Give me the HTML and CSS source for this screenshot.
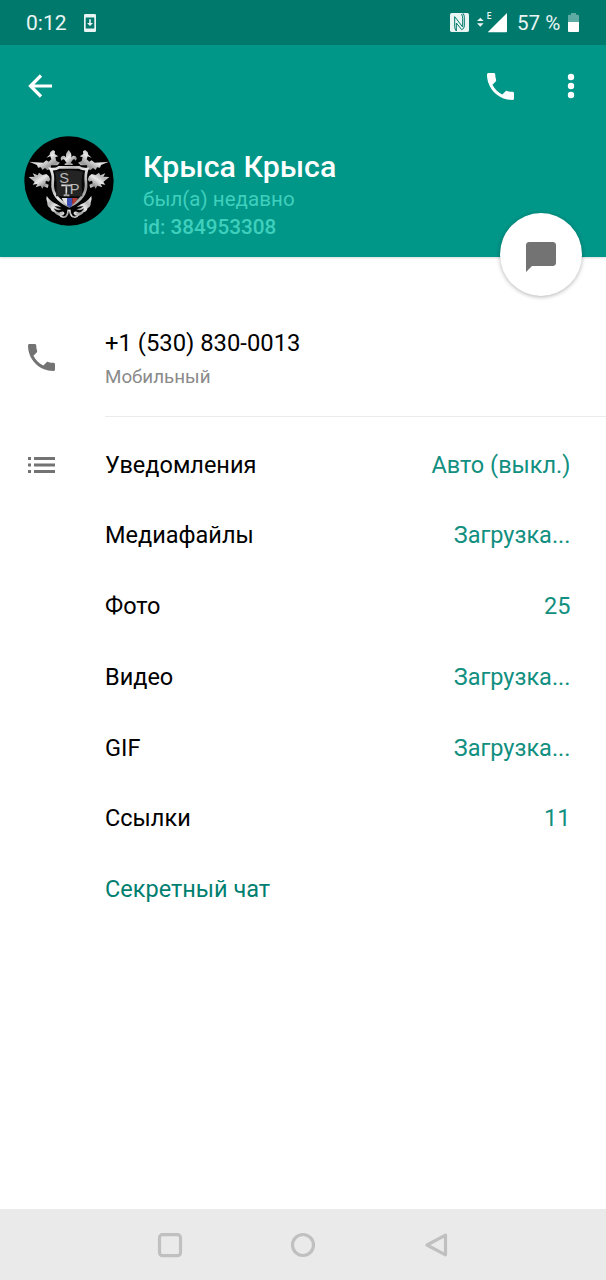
FILE: index.html
```html
<!DOCTYPE html>
<html lang="ru">
<head>
    <meta charset="UTF-8">
    <title>Профиль</title>
    <link rel="stylesheet" href="styles.css">
</head>
<body>
<div class="status-bar">
    <span class="time">0:12</span>
    <svg class="update-icon" width="12" height="18" viewBox="0 0 12 18">
        <path fill="#e9f5f3" fill-rule="evenodd" d="M1.500 0h9A1.300 1.300 0 0 1 12 1.300v15.400a1.300 1.300 0 0 1-1.500 1.300h-9A1.300 1.300 0 0 1 0 16.700V1.300A1.300 1.300 0 0 1 1.500 0zM1.700 3.500v11h8.600v-11zM5.200 5.300h1.600v3.600h2.200L6 12 3 8.900h2.200z"/>
    </svg>
    <div class="status-right">
        <svg class="nfc" width="19" height="19" viewBox="0 0 57 57">
            <path fill="#e9f5f3" d="M5 0h47q5 0 5 5v47q0 5-5 5H5q-5 0-5-5V5q0-5 5-5z"/>
            <path d="M19 54q-5-6-5-14V11l24 31V17q0-7-3-14M19 54V30l16 20q7-2 8-10V13q0-7-4-12" fill="none" stroke="#00796d" stroke-width="3"/>
        </svg>
        <svg class="signal" width="30" height="21" viewBox="0 0 90 63">
            <path fill="#e9f5f3" d="M0 27l10-10 10 10zM0 34h20L10 44z"/>
            <path fill="#fff" d="M32 61L90 3v55q0 3-3 3z"/>
            <text x="29" y="21" class="net">E</text>
        </svg>
        <span class="percent">57 %</span>
        <svg class="battery" width="11" height="19" viewBox="0 0 33 57">
            <path fill="#5eaba3" d="M9 0h15v5h6q3 0 3 3v19H0V8q0-3 3-3h6z"/>
            <path fill="#fff" d="M0 27h33v27q0 3-3 3H3q-3 0-3-3z"/>
        </svg>
    </div>
</div>

<div class="header">
    <div class="toolbar">
        <svg class="back" width="24" height="24" viewBox="0 0 24 24">
            <path d="M24 12H2.500M13 1.500L2.500 12 13 22.500" fill="none" stroke="#fff" stroke-width="3.200"/>
        </svg>
        <svg class="call" width="27" height="27" viewBox="3 3 18 18">
            <path fill="#fff" d="M6.620 10.790c1.440 2.830 3.760 5.140 6.590 6.590l2.200-2.200c.27-.27.67-.36 1.020-.24 1.120.37 2.330.57 3.570.57.55 0 1 .45 1 1V20c0 .55-.45 1-1 1-9.390 0-17-7.610-17-17 0-.55.45-1 1-1h3.500c.55 0 1 .45 1 1 0 1.250.2 2.450.57 3.570.11.35.03.74-.25 1.020l-2.200 2.200z"/>
        </svg>
        <svg class="more" width="8" height="26" viewBox="0 0 8 26">
            <g fill="#fff"><circle cx="4" cy="4" r="3.200"/><circle cx="4" cy="13" r="3.200"/><circle cx="4" cy="22" r="3.200"/></g>
        </svg>
    </div>
    <div class="user">
        <svg class="avatar" width="90" height="90" viewBox="28 32 270 270">
            <defs>
                <linearGradient id="metal" x1="0" y1="0" x2="1" y2="1">
                    <stop offset="0" stop-color="#f5f5f5"/>
                    <stop offset=".3" stop-color="#b5b5b5"/>
                    <stop offset=".5" stop-color="#e8e8e8"/>
                    <stop offset=".75" stop-color="#999"/>
                    <stop offset="1" stop-color="#eee"/>
                </linearGradient>
            </defs>
            <circle cx="163" cy="167" r="134"/>
            <g fill="url(#metal)">
                <!-- fleur-de-lis -->
                <path d="M162 74q15 16 4 33 5-19 15-15 9 6 2 14-4-7-9-2l-6 9 6 2v4h-24v-4l6-2-6-9q-5-5-9 2-7-8 2-14 10-4 15 15-11-17 4-33z"/>
                <!-- left half, mirrored below -->
                <g id="wing">
                    <path d="M43 109l43 3 9-7 7 4 8-7-3-9-12 4 10-9 2-8 8-6 6 4-1 8 11 7-9 3 3 11 11 5-8 8h-19l-1 11-10 3-7-6-8 6-4-8-9 1-3-8z"/>
                    <path d="M42 155l18-1-6-10 15 6 4-8 10 7 12-3 8 7 4 10-5 6-8-3-2 8 10 4-3 10-12-5-4 7-5-9-15 5 5-10-14 2 6-8z"/>
                    <path d="M96 212q11 16 31 25 8 4 14 9-15-4-22-3 8 7 22 9-12 6-24-3 9 16 24 12l7 4-2 5q-18 5-27-9-10-3-12-13-10-5-9-16-5-9-2-20z"/>
                </g>
                <use href="#wing" transform="matrix(-1 0 0 1 326 0)"/>
            </g>
            <path d="M108 131q16 2 25-5h60q8 7 25 5-7 16-4 42 4 44-50 70-54-26-50-70 3-26-6-42z" fill="#080808" stroke="url(#metal)" stroke-width="8"/>
            <path d="M121 139q42-9 84 0-7 17-2 74h-79q5-40-3-74z" fill="#242424"/>
            <g fill="none" stroke="url(#metal)" stroke-width="5">
                <path d="M161 253q-2 26-18 22-11-5-5-13 8-4 9 4"/>
                <path d="M165 253q2 26 18 22 11-5 5-13-8-4-9 4"/>
                <path d="M140 180h32M155 180v30M147 210h17" stroke-width="5"/>
            </g>
            <path fill="#e4e4e4" d="M141 218h16v22q-11-8-16-22z"/>
            <path fill="#3d4fb4" d="M157 218h16v22l-8 7-8-7z"/>
            <path fill="#b33b35" d="M173 218h16q-5 14-16 22z"/>
            <text x="134" y="174" class="mono">S</text>
            <text x="165" y="205" class="mono">P</text>
        </svg>
        <div class="user-info">
            <div class="name">Крыса Крыса</div>
            <div class="seen">был(а) недавно</div>
            <div class="user-id">id: 384953308</div>
        </div>
    </div>
    <div class="fab">
        <svg width="30" height="30" viewBox="2 2 20 20">
            <path fill="#737373" d="M20 2H4c-1.100 0-2 .9-2 2v18l4-4h14c1.100 0 2-.9 2-2V4c0-1.100-.9-2-2-2z"/>
        </svg>
    </div>
</div>

<div class="content">
    <div class="phone">
        <svg width="27" height="27" viewBox="3 3 18 18">
            <path fill="#737373" d="M6.620 10.790c1.440 2.830 3.760 5.140 6.590 6.590l2.200-2.200c.27-.27.67-.36 1.020-.24 1.120.37 2.330.57 3.570.57.55 0 1 .45 1 1V20c0 .55-.45 1-1 1-9.390 0-17-7.610-17-17 0-.55.45-1 1-1h3.500c.55 0 1 .45 1 1 0 1.250.2 2.450.57 3.570.11.35.03.74-.25 1.020l-2.200 2.200z"/>
        </svg>
        <div class="phone-text">
            <div class="number">+1 (530) 830-0013</div>
            <div class="type">Мобильный</div>
        </div>
    </div>
    <div class="row">
        <svg class="list-icon" width="27" height="16" viewBox="0 0 27 16">
            <path fill="#737373" d="M0 0h3v3H0zM6 0h21v3H6zM0 6.500h3v3H0zM6 6.500h21v3H6zM0 13h3v3H0zM6 13h21v3H6z"/>
        </svg>
        <span>Уведомления</span><span class="value">Авто (выкл.)</span>
    </div>
    <div class="row"><span>Медиафайлы</span><span class="value">Загрузка...</span></div>
    <div class="row"><span>Фото</span><span class="value">25</span></div>
    <div class="row"><span>Видео</span><span class="value">Загрузка...</span></div>
    <div class="row"><span>GIF</span><span class="value">Загрузка...</span></div>
    <div class="row"><span>Ссылки</span><span class="value">11</span></div>
    <div class="row"><span class="secret">Секретный чат</span></div>
</div>

<div class="nav">
    <svg width="26" height="26" viewBox="0 0 26 26"><rect x="2.500" y="2.700" width="21" height="21" rx="3"/></svg>
    <svg width="26" height="26" viewBox="0 0 26 26"><circle cx="13" cy="13" r="10.500"/></svg>
    <svg width="26" height="26" viewBox="0 0 26 26"><path d="M22.500 3.200v19.600L4 13z"/></svg>
</div>
</body>
</html>
```
FILE: styles.css
```css
* {
    box-sizing: border-box;
}

body {
    margin: 0;
    height: 1280px;
    display: flex;
    flex-direction: column;
    background-color: #fff;
    font-family: Roboto, sans-serif;
    color: #000;
    overflow: hidden;
}

svg {
    display: block;
    flex-shrink: 0;
}

.status-bar {
    height: 45px;
    display: flex;
    align-items: center;
    padding: 0 27px 0 26px;
    background-color: #00796d;
    color: #e9f5f3;
    font-size: 21px;
}

.time {
    width: 57.5px;
}

.status-right {
    margin-left: auto;
    display: flex;
    align-items: center;
}

.signal {
    margin: 0 11px 0 8px;
}

.net {
    font-size: 25px;
    font-weight: 500;
    fill: #e9f5f3;
}

.percent {
    width: 50px;
    margin-left: -1px;
    margin-right: 1px;
    font-size: 20.6px;
    white-space: nowrap;
}

.header {
    position: relative;
    height: 212px;
    background-color: #009688;
    box-shadow: 0 1px 2px rgba(0, 0, 0, 0.15);
}

.toolbar {
    display: flex;
    align-items: center;
    height: 82px;
    padding: 0 31px 0 28px;
}

.call {
    margin-left: auto;
    margin-right: 53px;
}

.user {
    display: flex;
    padding: 9px 0 0 24px;
}

.user-info {
    padding: 12px 0 0 29px;
}

.name {
    color: #fff;
    font-size: 30.3px;
    font-weight: 500;
    line-height: 37px;
}

.seen {
    color: #3fd0bd;
    font-size: 20.6px;
    line-height: 28px;
}

.user-id {
    color: #3fd0bd;
    font-size: 20.7px;
    font-weight: 500;
    line-height: 28px;
}

/* sits over the bottom edge of the header */
.fab {
    position: absolute;
    right: 24px;
    bottom: -39px;
    width: 82px;
    height: 83px;
    padding-top: 4px;
    display: flex;
    align-items: center;
    justify-content: center;
    border-radius: 50%;
    background-color: #fff;
    box-shadow: 0 1px 4px rgba(0, 0, 0, 0.3);
}

.content {
    flex: 1;
    padding-top: 58px;
}

.phone {
    display: flex;
    align-items: flex-start;
    height: 114.3px;
    padding-left: 28px;
}

.phone svg {
    margin-top: 29px;
}

.phone-text {
    flex: 1;
    height: 102px;
    margin-left: 50px;
    padding-top: 14px;
    border-bottom: 1px solid #ebebeb;
}

.number {
    font-size: 23.8px;
    line-height: 28px;
}

.type {
    padding-top: 8px;
    color: #8a8a8a;
    font-size: 18.8px;
    line-height: 24px;
}

.row {
    display: flex;
    align-items: center;
    height: 70.75px;
    padding: 0 35.5px 0 105px;
    font-size: 23.5px;
}

.list-icon {
    margin-left: -77px;
    margin-right: 50px;
    margin-top: 1px;
}

.value {
    margin-left: auto;
    color: #118f80;
}

.secret {
    color: #007f70;
}

.nav {
    display: flex;
    justify-content: center;
    align-items: center;
    gap: 107px;
    height: 71px;
    background-color: #eaeaea;
}

.nav svg {
    fill: none;
    stroke: #c0c0c0;
    stroke-width: 3.2;
    stroke-linejoin: round;
}

.mono {
    font-family: "Liberation Sans", sans-serif;
    font-size: 44px;
    fill: #b9b9b9;
}
```
